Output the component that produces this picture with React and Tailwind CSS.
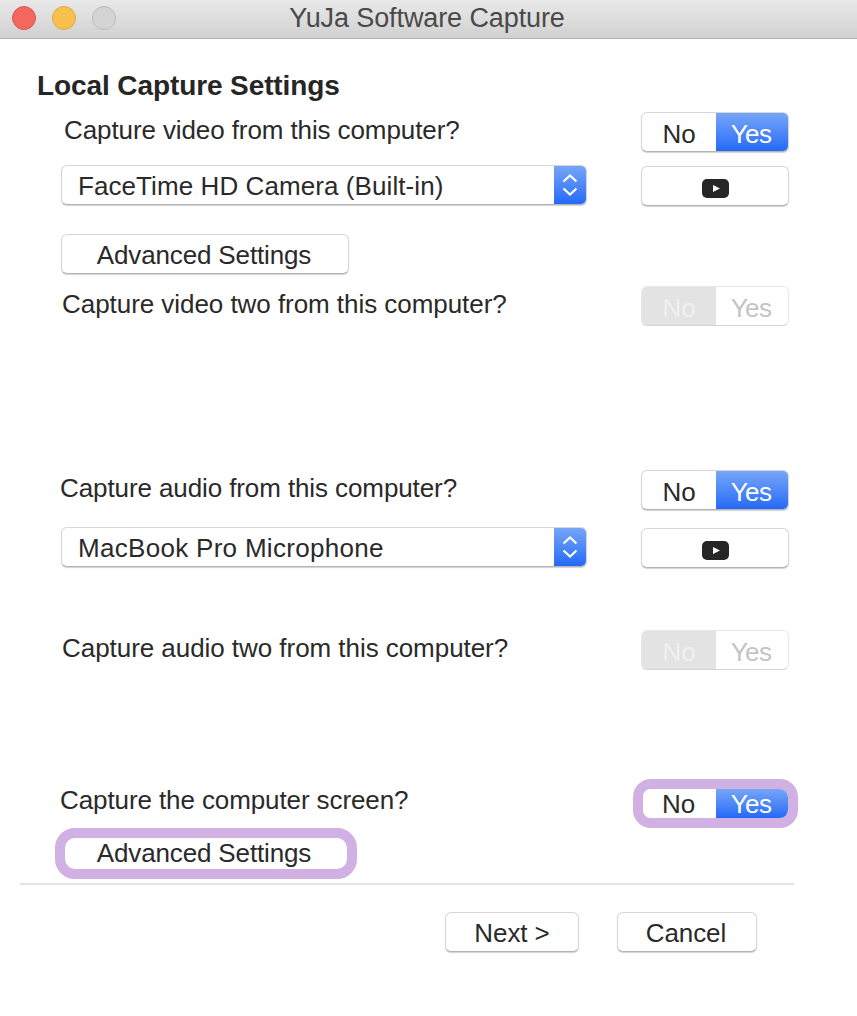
const font = { fontFamily: '"Liberation Sans", Arial, sans-serif' }

const buttonClass = 'flex items-center justify-center rounded-[6px] border border-[#d6d6d6] border-b-[#b4b4b4] bg-white shadow-[0_1px_1px_rgba(0,0,0,0.18)]'

const Toggle = ({ disabled = false, bare = false }) => {
	if (bare) {
		return (
			<div className="flex h-[29px] w-[145px] overflow-hidden rounded-[8px] bg-white">
				<div className="flex w-[73px] items-center justify-center pr-[2px] text-[#2a2a2a]">No</div>
				<div className="flex flex-1 items-center justify-center bg-gradient-to-b from-[#76a5f8] to-[#2469f6] pr-[2px] tracking-[-0.6px] text-white">Yes</div>
			</div>
		)
	}
	if (disabled) {
		return (
			<div className="flex h-[40px] w-[148px] overflow-hidden rounded-[6px] border border-[#e8e8e8] border-b-[#d4d4d4] bg-white">
				<div className="flex w-[74px] items-center justify-center bg-[#e3e3e3] pt-[3px] text-[#f1f1f1]">No</div>
				<div className="flex flex-1 items-center justify-center pr-[2px] pt-[3px] tracking-[-0.6px] text-[#c4c4c4]">Yes</div>
			</div>
		)
	}
	return (
		<div className="flex h-[40px] w-[148px] overflow-hidden rounded-[6px] border border-[#d6d6d6] border-b-[#b4b4b4] bg-white shadow-[0_1px_1px_rgba(0,0,0,0.18)]">
			<div className="flex w-[74px] items-center justify-center pt-[3px] text-[#2a2a2a]">No</div>
			<div className="flex flex-1 items-center justify-center bg-gradient-to-b from-[#76a5f8] to-[#2469f6] pr-[2px] pt-[3px] tracking-[-0.6px] text-white">Yes</div>
		</div>
	)
}

const PlayIcon = () => (
	<svg width="27" height="19" viewBox="0 0 27 19">
		<rect x="0" y="0" width="27" height="19" rx="5" fill="#262626" />
		<path d="M11 6 L18 9.5 L11 13 Z" fill="#fff" />
	</svg>
)

const Select = ({ label, labelClass }) => (
	<div className="flex h-[40px] w-[526px] overflow-hidden rounded-[6px] border border-[#d6d6d6] border-b-[#b4b4b4] bg-white shadow-[0_1px_1px_rgba(0,0,0,0.18)]">
		<div className={`flex flex-1 items-center pl-[16px] pt-[2px] text-[#2a2a2a] ${labelClass}`}>{label}</div>
		<div className="flex w-[32px] items-center justify-center bg-gradient-to-b from-[#76a5f8] to-[#2469f6]">
			<svg width="16" height="28" viewBox="0 0 16 28" fill="none" stroke="#fff" strokeWidth="2.2">
				<path d="M1.5 10.5 L8 4.5 L14.5 10.5" />
				<path d="M1.5 17.5 L8 23.5 L14.5 17.5" />
			</svg>
		</div>
	</div>
)

const Row = ({ left, label, labelClass, children, className }) => (
	<div className={`flex w-[789px] items-center justify-between ${className}`}>
		{label ? <span className={`mb-[4px] text-[#2a2a2a] ${labelClass}`}>{label}</span> : left}
		{children}
	</div>
)

const IconButton = () => (
	<div className={`${buttonClass} h-[40px] w-[148px] pt-[4px]`}>
		<PlayIcon />
	</div>
)

export default function App() {
	return (
		<div className="h-[1016px] w-[857px] overflow-hidden bg-white text-[26px] leading-[30px] tracking-[-0.1px]" style={font}>
			<div className="flex h-[39px] items-center border-b border-[#b2b2b2] bg-gradient-to-b from-[#e9e9e9] to-[#d1d1d1] pl-[12px]">
				<div className="flex gap-[16px] pb-[3px]">
					<div className="h-[24px] w-[24px] rounded-full border border-[#e2574f] bg-[#f2685f]" />
					<div className="h-[24px] w-[24px] rounded-full border border-[#e4a93f] bg-[#f8c14f]" />
					<div className="h-[24px] w-[24px] rounded-full border border-[#bcbcbc] bg-[#d4d4d4]" />
				</div>
				<div className="flex-1 pb-[3px] pr-[119px] text-center text-[27px] text-[#4a4a4a]">YuJa Software Capture</div>
			</div>

			<h1 className="ml-[37px] mt-[32px] text-[28px] font-bold text-[#262626]">Local Capture Settings</h1>

			<Row label="Capture video from this computer?" labelClass="ml-[64px]" className="mt-[11px] h-[40px]">
				<Toggle />
			</Row>
			<Row left={<div className="ml-[61px]"><Select label="FaceTime HD Camera (Built-in)" labelClass="tracking-[0.08px]" /></div>} className="mt-[13px] h-[41px] !items-start">
				<div className="mt-[1px]"><IconButton /></div>
			</Row>
			<div className={`${buttonClass} ml-[61px] mt-[28px] h-[40px] w-[288px] pr-[2px] pt-[2px] tracking-[-0.15px] text-[#2a2a2a]`}>Advanced Settings</div>
			<Row label="Capture video two from this computer?" labelClass="ml-[62px] tracking-[-0.05px]" className="mt-[12px] h-[40px]">
				<Toggle disabled />
			</Row>

			<Row label="Capture audio from this computer?" labelClass="ml-[60px]" className="mt-[144px] h-[40px]">
				<Toggle />
			</Row>
			<Row left={<div className="ml-[61px]"><Select label="MacBook Pro Microphone" labelClass="tracking-[0.3px]" /></div>} className="mt-[17px] h-[41px] !items-start">
				<div className="mt-[1px]"><IconButton /></div>
			</Row>
			<Row label="Capture audio two from this computer?" labelClass="ml-[62px] tracking-[-0.05px]" className="mt-[62px] h-[40px]">
				<Toggle disabled />
			</Row>

			<div className="mt-[109px] flex h-[49px] w-[798px] items-center justify-between">
				<span className="mb-[7px] ml-[60px] text-[#2a2a2a]">Capture the computer screen?</span>
				<div className="rounded-[18px] border-[10px] border-[#d1b0e3]">
					<Toggle bare />
				</div>
			</div>
			<div className="ml-[55px] flex h-[51px] w-[302px] items-center justify-center rounded-[20px] border-[10px] border-[#d1b0e3] bg-white pb-[1px] pr-[4px] tracking-[-0.15px] text-[#2a2a2a]">
				Advanced Settings
			</div>

			<div className="ml-[20px] mt-[4px] h-[2px] w-[774px] bg-[#e4e4e4]" />

			<div className="ml-[445px] mt-[27px] flex gap-[38px] text-[#2a2a2a]">
				<div className={`${buttonClass} h-[40px] w-[134px] pt-[2px]`}>Next &gt;</div>
				<div className={`${buttonClass} h-[40px] w-[140px] pr-[2px] pt-[2px]`}>Cancel</div>
			</div>
		</div>
	)
}
